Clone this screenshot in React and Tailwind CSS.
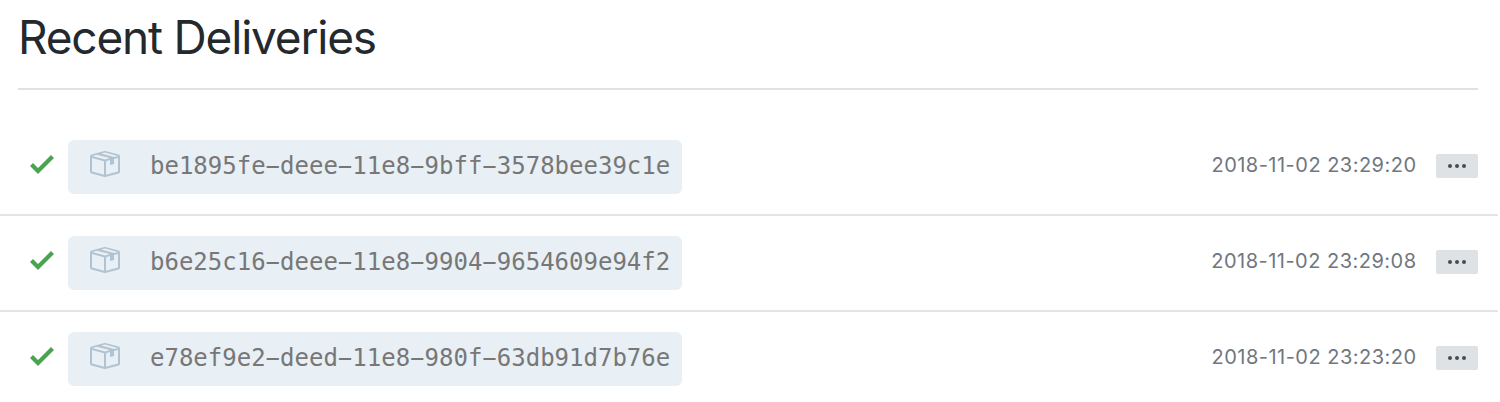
const deliveries = [
  { id: "be1895fe-deee-11e8-9bff-3578bee39c1e", time: "2018-11-02 23:29:20" },
  { id: "b6e25c16-deee-11e8-9904-9654609e94f2", time: "2018-11-02 23:29:08" },
  { id: "e78ef9e2-deed-11e8-980f-63db91d7b76e", time: "2018-11-02 23:23:20" },
];

function Check() {
  return (
    <svg className="mb-1.5 ml-[30px] h-8 w-6 shrink-0" viewBox="0 0 12 16" fill="#49a350">
      <path d="M12 5l-8 8-4-4 1.5-1.5L4 10l6.5-6.5L12 5z" />
    </svg>
  );
}

function Package() {
  return (
    <svg className="mb-1.5 ml-5 h-8 w-8 shrink-0" viewBox="0 0 16 16" fill="#b1c3d0">
      <path fillRule="evenodd" d="M1 4.27v7.47c0 .45.3.84.75.97l6.5 1.73c.16.05.34.05.5 0l6.5-1.73c.45-.13.75-.52.75-.97V4.27c0-.45-.3-.84-.75-.97l-6.5-1.74a1.4 1.4 0 0 0-.5 0L1.75 3.3c-.45.13-.75.52-.75.97zm7 9.09l-6-1.59V5l6 1.61v6.75zM2 4l2.5-.67L11 5.06l-2.5.67L2 4zm13 7.77l-6 1.59V6.61l2-.55V8.5l2-.53V5.53L15 5v6.77zm-2-7.24L6.5 2.8l2-.53L15 4l-2 .53z" />
    </svg>
  );
}

function Guid({ id }) {
  return (
    <code className="mb-0.5 ml-[30px] whitespace-nowrap font-['DejaVu_Sans_Mono',monospace] text-[24px] leading-none text-[#777777]">
      {id.split(/(-)/).map((part, i) =>
        part === "-" ? <span key={i} className="[text-shadow:3px_0_currentColor,-3px_0_currentColor]">-</span> : part
      )}
    </code>
  );
}

function Delivery({ id, time }) {
  return (
    <li className="mr-0.5 flex h-24 items-center border-b-2 border-[#e1e4e8]">
      <Check />
      <div className="ml-[14px] flex h-[54px] w-[614px] items-center rounded-[6px] bg-[#e8eff5]">
        <Package />
        <Guid id={id} />
      </div>
      <time className="mr-[19.5px] mb-1 ml-auto font-['Inter',sans-serif] text-[20px] tracking-[0.48px] text-[#6f7780]">{time}</time>
      <button aria-label="Details" className="mr-5 mb-0.5 flex h-6 w-[42px] items-center justify-center gap-[3px] rounded-[2px] bg-[#dfe2e5]">
        <span className="size-1 rounded-full bg-[#444d56]" />
        <span className="size-1 rounded-full bg-[#444d56]" />
        <span className="size-1 rounded-full bg-[#444d56]" />
      </button>
    </li>
  );
}

export default function App() {
  return (
    <main className="h-[402px] w-[1500px] overflow-hidden bg-white">
      <h2 className="mr-[22px] ml-[18px] h-[90px] border-b-2 border-[#dfe2e5] pt-[9px] font-['Inter',sans-serif] text-[46px] leading-[56px] font-normal tracking-[-1.2px] text-[#24292e]">Recent Deliveries</h2>
      <ul className="pt-[30px]">
        {deliveries.map((d) => <Delivery key={d.id} {...d} />)}
      </ul>
    </main>
  );
}
